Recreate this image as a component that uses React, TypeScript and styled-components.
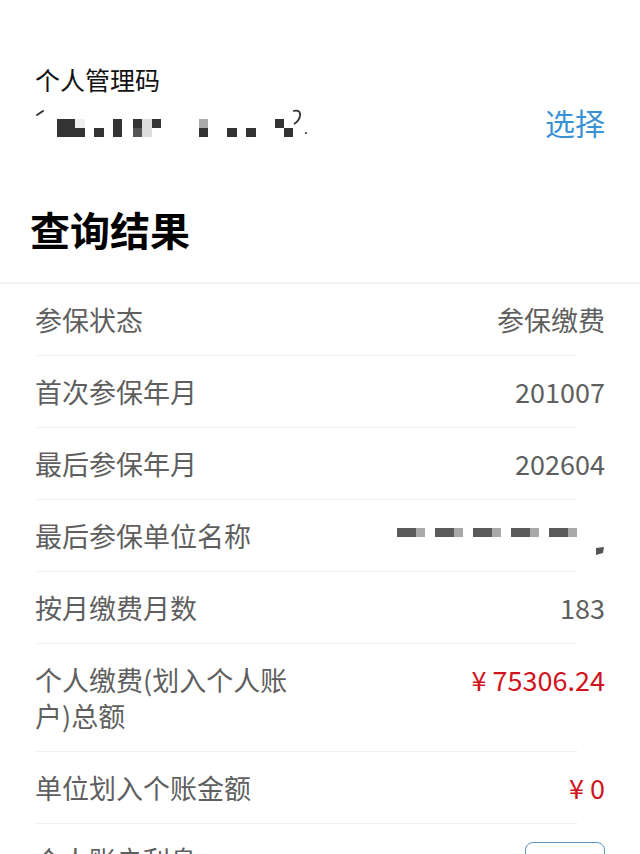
import React from 'react';
import styled, { createGlobalStyle } from 'styled-components';

const GlobalStyle = createGlobalStyle`
  html, body {
    margin: 0;
    padding: 0;
    background: #ffffff;
    overflow: hidden;
  }
  body {
    font-family: "Noto Sans CJK SC", "Noto Sans", sans-serif;
  }
`;

const Page = styled.div`
  width: 640px;
  height: 854px;
  overflow: hidden;
  background: #fff;
`;

const CodeSection = styled.div`
  padding: 62px 35px 0 35px;
`;

const CodeLabel = styled.div`
  font-size: 25px;
  line-height: 34px;
  color: #111;
`;

const CodeRow = styled.div`
  height: 52px;
  display: flex;
  align-items: center;
  justify-content: space-between;
`;

const PickButton = styled.span`
  font-size: 30px;
  line-height: 40px;
  color: #3a92d4;
`;

const TitleBlock = styled.div`
  padding: 56px 30px 28px 30px;
  border-bottom: 2px solid #f4f4f4;
`;

const Title = styled.h1`
  margin: 0;
  font-size: 40px;
  line-height: 50px;
  font-weight: 700;
  color: #000;
`;

const List = styled.div`
  padding-left: 35px;
  padding-right: 35px;
`;

const Row = styled.div`
  display: flex;
  justify-content: space-between;
  align-items: flex-start;
  padding: 17.5px 0 18.5px 0;
  background: linear-gradient(#f2f2f2, #f2f2f2) no-repeat left bottom / calc(100% - 27px) 1px;
`;

const Label = styled.div`
  font-size: 27px;
  line-height: 36px;
  color: #5f5f5f;
  max-width: 262px;
`;

const Value = styled.div<{ $tone?: 'red' }>`
  display: flex;
  align-items: center;
  height: 36px;
  font-size: 27px;
  line-height: 36px;
  color: ${(p) => (p.$tone === 'red' ? '#d0141e' : '#5f5f5f')};
  white-space: nowrap;

  svg {
    display: block;
    overflow: visible;
  }
`;

const OutlineButton = styled.div`
  width: 78px;
  height: 42px;
  margin-top: 0;
  border: 1.5px solid #5a96c0;
  border-radius: 8px;
`;

type Cell = [number, number, number, number, string];

// mosaic that hides the code, cells in px relative to the svg
const codeCells: Cell[] = [
  [22, 13, 18, 18, '#333'],
  [40, 13, 10, 9, '#eee'],
  [40, 22, 10, 9, '#333'],
  [59, 22, 10, 9, '#333'],
  [78, 13, 9, 18, '#333'],
  [98, 13, 9, 9, '#333'],
  [98, 22, 9, 9, '#555'],
  [107, 13, 10, 18, '#ddd'],
  [117, 13, 9, 9, '#333'],
  [164, 13, 9, 9, '#aaa'],
  [164, 22, 9, 9, '#333'],
  [192, 22, 10, 9, '#333'],
  [211, 22, 10, 9, '#333'],
  [240, 13, 9, 9, '#333'],
  [249, 22, 9, 9, '#333'],
];

const MaskedCode = () => (
  <svg width="280" height="32" viewBox="0 0 280 32">
    <path d="M2 9 L8 5" stroke="#333" strokeWidth="2" strokeLinecap="round" />
    {codeCells.map(([x, y, w, h, c], i) => (
      <rect key={i} x={x} y={y} width={w} height={h} fill={c} />
    ))}
    <path d="M258 5 Q266 3 265 10 Q264 15 259 18" stroke="#333" strokeWidth="1.8" fill="none" />
    <rect x="270" y="26" width="2" height="2" fill="#555" />
  </svg>
);

const MaskedCompany = () => (
  <svg width="208" height="36" viewBox="0 0 208 36">
    {[0, 38, 76, 114, 152].map((x) => (
      <g key={x}>
        <rect x={x} y={10} width={19} height={9} fill="#5a5a5a" />
        <rect x={x + 19} y={10} width={9} height={9} fill="#a8a8a8" />
      </g>
    ))}
    <path d="M199 30 L207 29 L206 35 L199 37 Z" fill="#555" />
  </svg>
);

const App = () => {
  return (
    <Page>
      <GlobalStyle />
      <CodeSection>
        <CodeLabel>个人管理码</CodeLabel>
        <CodeRow>
          <MaskedCode />
          <PickButton>选择</PickButton>
        </CodeRow>
      </CodeSection>
      <TitleBlock>
        <Title>查询结果</Title>
      </TitleBlock>
      <List>
        <Row>
          <Label>参保状态</Label>
          <Value>参保缴费</Value>
        </Row>
        <Row>
          <Label>首次参保年月</Label>
          <Value>201007</Value>
        </Row>
        <Row>
          <Label>最后参保年月</Label>
          <Value>202604</Value>
        </Row>
        <Row>
          <Label>最后参保单位名称</Label>
          <Value>
            <MaskedCompany />
          </Value>
        </Row>
        <Row>
          <Label>按月缴费月数</Label>
          <Value>183</Value>
        </Row>
        <Row>
          <Label>个人缴费(划入个人账户)总额</Label>
          <Value $tone="red">¥ 75306.24</Value>
        </Row>
        <Row>
          <Label>单位划入个账金额</Label>
          <Value $tone="red">¥ 0</Value>
        </Row>
        <Row>
          <Label>个人账户利息</Label>
          <OutlineButton />
        </Row>
      </List>
    </Page>
  );
};

export default App;
